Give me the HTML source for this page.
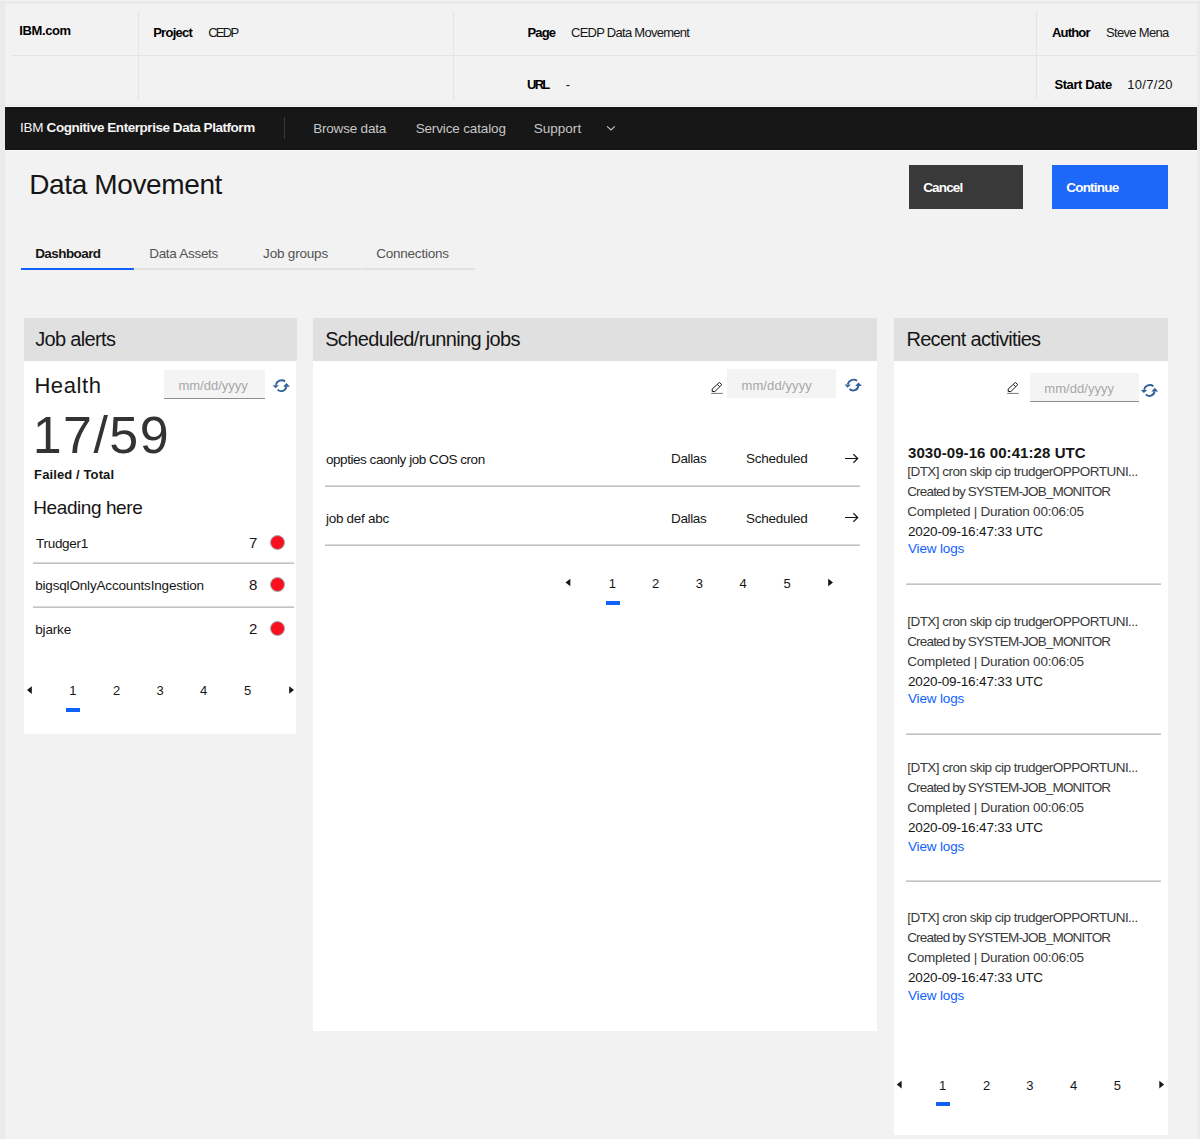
<!DOCTYPE html>
<html><head><meta charset="utf-8"><title>Data Movement</title>
<style>
html,body{margin:0;padding:0;}
body{width:1200px;height:1139px;overflow:hidden;background:#eaeaea;position:relative;font-family:"Liberation Sans",sans-serif;}
.a{position:absolute;}
.t{position:absolute;white-space:nowrap;line-height:1;}
svg{position:absolute;overflow:visible;}
</style></head><body>
<div class="a" style="left:5px;top:4px;width:1192px;height:1135px;background:#f2f2f2"></div>
<div class="a" style="left:0;top:0;width:1200px;height:1px;background:#f2f2f2"></div>
<!-- header table lines -->
<div class="a" style="left:12px;top:55px;width:1185px;height:1px;background:#e4e4e4"></div>
<div class="a" style="left:138px;top:11px;width:1px;height:88px;background:#e4e4e4"></div>
<div class="a" style="left:453px;top:11px;width:1px;height:88px;background:#e4e4e4"></div>
<div class="a" style="left:1036px;top:11px;width:1px;height:88px;background:#e4e4e4"></div>
<div class="a" style="left:5px;top:105px;width:1192px;height:1px;background:#e6e6e6"></div>
<div class="a" style="left:5px;top:106px;width:1192px;height:1px;background:#fafafa"></div>
<div class="a" style="left:5px;top:150px;width:1192px;height:1px;background:#fafafa"></div>
<!-- nav -->
<div class="a" style="left:5px;top:107px;width:1192px;height:43px;background:#171717"></div>
<div class="a" style="left:284px;top:117px;width:1px;height:22px;background:#393939"></div>
<svg style="left:0;top:0" width="1200" height="200"><path d="M607.1,126.3 L611,130 L614.8,126.3" fill="none" stroke="#c6c6c6" stroke-width="1.1"/></svg>
<!-- buttons -->
<div class="a" style="left:909px;top:165px;width:114px;height:44px;background:#393939"></div>
<div class="a" style="left:1052px;top:165px;width:116px;height:44px;background:#1d68f8"></div>
<!-- tabs -->
<div class="a" style="left:21px;top:268px;width:113px;height:2px;background:#0f62fe"></div>
<div class="a" style="left:135px;top:268px;width:226px;height:2px;background:#e0e0e0"></div>
<div class="a" style="left:362px;top:268px;width:113px;height:2px;background:#e0e0e0"></div>
<!-- panels -->
<div class="a" style="left:24px;top:318px;width:273px;height:43px;background:#e0e0e0"></div>
<div class="a" style="left:24px;top:361px;width:272px;height:373px;background:#fff"></div>
<div class="a" style="left:313px;top:318px;width:564px;height:43px;background:#e0e0e0"></div>
<div class="a" style="left:313px;top:361px;width:564px;height:670px;background:#fff"></div>
<div class="a" style="left:894px;top:318px;width:274px;height:43px;background:#e0e0e0"></div>
<div class="a" style="left:894px;top:361px;width:274px;height:774px;background:#fff"></div>
<!-- date inputs -->
<div class="a" style="left:164px;top:370px;width:101px;height:28px;background:#f4f4f4;border-bottom:1px solid #8d8d8d"></div>
<div class="a" style="left:727px;top:369px;width:109px;height:29px;background:#f4f4f4"></div>
<div class="a" style="left:1030px;top:373px;width:109px;height:28px;background:#f4f4f4;border-bottom:1px solid #8d8d8d"></div>
<!-- left list dividers -->
<div class="a" style="left:33px;top:562px;width:261px;height:2px;background:linear-gradient(#d9d9d9 50%,#c3c3c3 50%)"></div>
<div class="a" style="left:33px;top:606px;width:261px;height:2px;background:linear-gradient(#d9d9d9 50%,#c3c3c3 50%)"></div>
<!-- red dots -->
<div class="a" style="left:270px;top:535px;width:13px;height:13px;border-radius:50%;background:#fa0f1e;border:0.7px solid #a0aeb2"></div>
<div class="a" style="left:270px;top:577px;width:13px;height:13px;border-radius:50%;background:#fa0f1e;border:0.7px solid #a0aeb2"></div>
<div class="a" style="left:270px;top:621.3px;width:13px;height:13px;border-radius:50%;background:#fa0f1e;border:0.7px solid #a0aeb2"></div>
<!-- middle dividers -->
<div class="a" style="left:325px;top:485px;width:535px;height:2px;background:linear-gradient(#d9d9d9 50%,#c3c3c3 50%)"></div>
<div class="a" style="left:325px;top:544px;width:535px;height:2px;background:linear-gradient(#d9d9d9 50%,#c3c3c3 50%)"></div>
<!-- right dividers -->
<div class="a" style="left:906px;top:583px;width:255px;height:2px;background:linear-gradient(#d9d9d9 50%,#c3c3c3 50%)"></div>
<div class="a" style="left:906px;top:733px;width:255px;height:2px;background:linear-gradient(#d9d9d9 50%,#c3c3c3 50%)"></div>
<div class="a" style="left:906px;top:880px;width:255px;height:2px;background:linear-gradient(#d9d9d9 50%,#c3c3c3 50%)"></div>
<!-- pagination underlines -->
<div class="a" style="left:66px;top:708px;width:14px;height:4px;background:#0f62fe"></div>
<div class="a" style="left:606px;top:601px;width:14px;height:4px;background:#0f62fe"></div>
<div class="a" style="left:936px;top:1102px;width:14px;height:4px;background:#0f62fe"></div>
<!-- icons svg layer -->
<svg style="left:0;top:0" width="1200" height="1139">
<defs>
<g id="sync"><path d="M3.8,5.9 A6,6 0 0 1 13.1,2.4" fill="none" stroke="#2e6099" stroke-width="1.9"/><path d="M0.6,6.2 L6.9,6.2 L3.6,9.3 Z" fill="#2e6099"/><path d="M5.5,10.6 A5.2,5.2 0 0 0 14.3,7.6" fill="none" stroke="#2e6099" stroke-width="1.9"/><path d="M11.1,7.7 L14.5,4.0 L17.9,7.7 Z" fill="#2e6099"/></g>
<g id="pencil"><path d="M2.2,9.0 L9.4,2.5 L11.8,4.7 L4.8,11.6 L2.2,11.5 Z M7.4,4.5 L9.6,6.7" fill="none" stroke="#161616" stroke-width="1" stroke-linejoin="round"/><path d="M1.2,13.4 H12.8" stroke="#777" stroke-width="1"/></g>
<g id="arrow"><path d="M0,4.2 H12.6 M8.4,0 L12.7,4.2 L8.4,8.4" fill="none" stroke="#161616" stroke-width="1.2"/></g>
<g id="cl"><path d="M4.8,0 L0,3.8 L4.8,7.6 Z" fill="#161616"/></g>
<g id="cr"><path d="M0,0 L4.8,3.8 L0,7.6 Z" fill="#161616"/></g>
</defs>
<use href="#sync" x="272" y="379"/>
<use href="#sync" x="844" y="378.4"/>
<use href="#sync" x="1140.3" y="383.8"/>
<use href="#pencil" x="710" y="380"/>
<use href="#pencil" x="1006" y="380"/>
<use href="#arrow" x="845" y="454.3"/>
<use href="#arrow" x="845" y="513.3"/>
<use href="#cl" x="27" y="686.3"/>
<use href="#cr" x="289.2" y="686.2"/>
<use href="#cl" x="565.5" y="578.7"/>
<use href="#cr" x="828.2" y="578.7"/>
<use href="#cl" x="896.8" y="1080.8"/>
<use href="#cr" x="1159.3" y="1080.8"/>
</svg>

<div class="t" style="left:19.20px;top:23.60px;font-size:13px;font-weight:bold;color:#000;letter-spacing:-0.372px;">IBM.com</div>
<div class="t" style="left:153.15px;top:25.70px;font-size:13px;font-weight:bold;color:#000;letter-spacing:-0.712px;">Project</div>
<div class="t" style="left:208.15px;top:25.70px;font-size:13px;color:#161616;letter-spacing:-1.726px;">CEDP</div>
<div class="t" style="left:527.42px;top:26.00px;font-size:13px;font-weight:bold;color:#000;letter-spacing:-0.824px;">Page</div>
<div class="t" style="left:570.98px;top:26.00px;font-size:13px;color:#161616;letter-spacing:-0.720px;">CEDP Data Movement</div>
<div class="t" style="left:1052.00px;top:26.00px;font-size:13px;font-weight:bold;color:#000;letter-spacing:-0.808px;">Author</div>
<div class="t" style="left:1105.98px;top:26.00px;font-size:13px;color:#161616;letter-spacing:-0.668px;">Steve Mena</div>
<div class="t" style="left:526.98px;top:78.30px;font-size:13px;font-weight:bold;color:#000;letter-spacing:-1.729px;">URL</div>
<div class="t" style="left:565.70px;top:78.30px;font-size:13px;color:#161616;">-</div>
<div class="t" style="left:1054.42px;top:78.20px;font-size:13px;font-weight:bold;color:#000;letter-spacing:-0.399px;">Start Date</div>
<div class="t" style="left:1127.20px;top:78.20px;font-size:13px;color:#161616;letter-spacing:0.331px;">10/7/20</div>
<div class="t" style="left:20.00px;top:120.75px;font-size:13.5px;color:#f4f4f4;letter-spacing:-0.210px;">IBM</div>
<div class="t" style="left:46.60px;top:120.75px;font-size:13.5px;font-weight:bold;color:#f4f4f4;letter-spacing:-0.454px;">Cognitive Enterprise Data Platform</div>
<div class="t" style="left:313.20px;top:122.25px;font-size:13.5px;color:#c6c6c6;letter-spacing:-0.196px;">Browse data</div>
<div class="t" style="left:415.64px;top:122.25px;font-size:13.5px;color:#c6c6c6;letter-spacing:-0.141px;">Service catalog</div>
<div class="t" style="left:533.64px;top:122.25px;font-size:13.5px;color:#c6c6c6;letter-spacing:0.040px;">Support</div>
<div class="t" style="left:29.16px;top:170.50px;font-size:28px;color:#161616;letter-spacing:-0.367px;">Data Movement</div>
<div class="t" style="left:923.15px;top:181.25px;font-size:13.5px;font-weight:bold;color:#ffffff;letter-spacing:-0.838px;">Cancel</div>
<div class="t" style="left:1066.20px;top:181.25px;font-size:13.5px;font-weight:bold;color:#ffffff;letter-spacing:-0.773px;">Continue</div>
<div class="t" style="left:35.20px;top:246.75px;font-size:13.5px;font-weight:bold;color:#161616;letter-spacing:-0.579px;">Dashboard</div>
<div class="t" style="left:149.20px;top:246.75px;font-size:13.5px;color:#525252;letter-spacing:-0.290px;">Data Assets</div>
<div class="t" style="left:263.10px;top:246.75px;font-size:13.5px;color:#525252;letter-spacing:-0.191px;">Job groups</div>
<div class="t" style="left:376.20px;top:246.75px;font-size:13.5px;color:#525252;letter-spacing:-0.219px;">Connections</div>
<div class="t" style="left:35.15px;top:329.00px;font-size:20px;color:#161616;letter-spacing:-0.662px;">Job alerts</div>
<div class="t" style="left:34.40px;top:374.50px;font-size:22px;color:#161616;letter-spacing:0.593px;">Health</div>
<div class="t" style="left:178.50px;top:379.40px;font-size:13px;color:#a8a8a8;letter-spacing:-0.017px;">mm/dd/yyyy</div>
<div class="t" style="left:32.80px;top:409.30px;font-size:52px;color:#333333;letter-spacing:1.408px;">17/59</div>
<div class="t" style="left:34.10px;top:468.00px;font-size:13px;font-weight:bold;color:#161616;letter-spacing:0.115px;">Failed / Total</div>
<div class="t" style="left:33.30px;top:498.00px;font-size:19px;color:#161616;letter-spacing:-0.424px;">Heading here</div>
<div class="t" style="left:36.00px;top:536.75px;font-size:13.5px;color:#161616;letter-spacing:-0.285px;">Trudger1</div>
<div class="t" style="left:35.20px;top:578.75px;font-size:13.5px;color:#161616;letter-spacing:-0.170px;">bigsqlOnlyAccountsIngestion</div>
<div class="t" style="left:35.20px;top:622.75px;font-size:13.5px;color:#161616;letter-spacing:-0.148px;">bjarke</div>
<div class="t" style="left:249.00px;top:535.00px;font-size:15px;color:#161616;">7</div>
<div class="t" style="left:249.00px;top:577.00px;font-size:15px;color:#161616;">8</div>
<div class="t" style="left:249.00px;top:621.25px;font-size:15px;color:#161616;">2</div>
<div class="t" style="left:72.80px;top:684.00px;font-size:13px;color:#161616;width:40px;margin-left:-20px;text-align:center;">1</div>
<div class="t" style="left:116.50px;top:684.00px;font-size:13px;color:#161616;width:40px;margin-left:-20px;text-align:center;">2</div>
<div class="t" style="left:160.00px;top:684.00px;font-size:13px;color:#161616;width:40px;margin-left:-20px;text-align:center;">3</div>
<div class="t" style="left:203.50px;top:684.00px;font-size:13px;color:#161616;width:40px;margin-left:-20px;text-align:center;">4</div>
<div class="t" style="left:247.60px;top:684.00px;font-size:13px;color:#161616;width:40px;margin-left:-20px;text-align:center;">5</div>
<div class="t" style="left:325.18px;top:328.80px;font-size:20px;color:#161616;letter-spacing:-0.650px;">Scheduled/running jobs</div>
<div class="t" style="left:741.50px;top:378.50px;font-size:13px;color:#a8a8a8;letter-spacing:0.103px;">mm/dd/yyyy</div>
<div class="t" style="left:326.00px;top:452.75px;font-size:13.5px;color:#161616;letter-spacing:-0.458px;">oppties caonly job COS cron</div>
<div class="t" style="left:671.08px;top:452.45px;font-size:13.5px;color:#161616;letter-spacing:-0.375px;">Dallas</div>
<div class="t" style="left:746.08px;top:452.45px;font-size:13.5px;color:#161616;letter-spacing:-0.268px;">Scheduled</div>
<div class="t" style="left:326.00px;top:512.05px;font-size:13.5px;color:#161616;letter-spacing:-0.287px;">job def abc</div>
<div class="t" style="left:671.08px;top:511.55px;font-size:13.5px;color:#161616;letter-spacing:-0.375px;">Dallas</div>
<div class="t" style="left:746.08px;top:511.55px;font-size:13.5px;color:#161616;letter-spacing:-0.268px;">Scheduled</div>
<div class="t" style="left:612.30px;top:577.20px;font-size:13px;color:#161616;width:40px;margin-left:-20px;text-align:center;">1</div>
<div class="t" style="left:655.70px;top:577.20px;font-size:13px;color:#161616;width:40px;margin-left:-20px;text-align:center;">2</div>
<div class="t" style="left:699.40px;top:577.20px;font-size:13px;color:#161616;width:40px;margin-left:-20px;text-align:center;">3</div>
<div class="t" style="left:743.00px;top:577.20px;font-size:13px;color:#161616;width:40px;margin-left:-20px;text-align:center;">4</div>
<div class="t" style="left:787.00px;top:577.20px;font-size:13px;color:#161616;width:40px;margin-left:-20px;text-align:center;">5</div>
<div class="t" style="left:906.40px;top:328.90px;font-size:20px;color:#161616;letter-spacing:-0.681px;">Recent activities</div>
<div class="t" style="left:1044.30px;top:381.70px;font-size:13px;color:#a8a8a8;letter-spacing:0.044px;">mm/dd/yyyy</div>
<div class="t" style="left:908.00px;top:444.90px;font-size:15px;font-weight:bold;color:#161616;letter-spacing:0.077px;">3030-09-16 00:41:28 UTC</div>
<div class="t" style="left:907.20px;top:464.75px;font-size:13.5px;color:#393939;letter-spacing:-0.525px;">[DTX] cron skip cip trudgerOPPORTUNI...</div>
<div class="t" style="left:907.20px;top:484.75px;font-size:13.5px;color:#393939;letter-spacing:-0.828px;">Created by SYSTEM-JOB_MONITOR</div>
<div class="t" style="left:907.20px;top:504.75px;font-size:13.5px;color:#393939;letter-spacing:-0.245px;">Completed | Duration 00:06:05</div>
<div class="t" style="left:908.00px;top:524.75px;font-size:13.5px;color:#161616;letter-spacing:-0.159px;">2020-09-16:47:33 UTC</div>
<div class="t" style="left:908.00px;top:542.05px;font-size:13.5px;color:#0f62fe;letter-spacing:-0.157px;">View logs</div>
<div class="t" style="left:907.20px;top:614.75px;font-size:13.5px;color:#393939;letter-spacing:-0.525px;">[DTX] cron skip cip trudgerOPPORTUNI...</div>
<div class="t" style="left:907.20px;top:634.75px;font-size:13.5px;color:#393939;letter-spacing:-0.828px;">Created by SYSTEM-JOB_MONITOR</div>
<div class="t" style="left:907.20px;top:654.75px;font-size:13.5px;color:#393939;letter-spacing:-0.245px;">Completed | Duration 00:06:05</div>
<div class="t" style="left:908.00px;top:674.75px;font-size:13.5px;color:#161616;letter-spacing:-0.159px;">2020-09-16:47:33 UTC</div>
<div class="t" style="left:908.00px;top:692.05px;font-size:13.5px;color:#0f62fe;letter-spacing:-0.157px;">View logs</div>
<div class="t" style="left:907.20px;top:761.45px;font-size:13.5px;color:#393939;letter-spacing:-0.525px;">[DTX] cron skip cip trudgerOPPORTUNI...</div>
<div class="t" style="left:907.20px;top:781.45px;font-size:13.5px;color:#393939;letter-spacing:-0.828px;">Created by SYSTEM-JOB_MONITOR</div>
<div class="t" style="left:907.20px;top:801.45px;font-size:13.5px;color:#393939;letter-spacing:-0.245px;">Completed | Duration 00:06:05</div>
<div class="t" style="left:908.00px;top:821.45px;font-size:13.5px;color:#161616;letter-spacing:-0.159px;">2020-09-16:47:33 UTC</div>
<div class="t" style="left:908.00px;top:840.05px;font-size:13.5px;color:#0f62fe;letter-spacing:-0.157px;">View logs</div>
<div class="t" style="left:907.20px;top:911.45px;font-size:13.5px;color:#393939;letter-spacing:-0.525px;">[DTX] cron skip cip trudgerOPPORTUNI...</div>
<div class="t" style="left:907.20px;top:931.45px;font-size:13.5px;color:#393939;letter-spacing:-0.828px;">Created by SYSTEM-JOB_MONITOR</div>
<div class="t" style="left:907.20px;top:951.45px;font-size:13.5px;color:#393939;letter-spacing:-0.245px;">Completed | Duration 00:06:05</div>
<div class="t" style="left:908.00px;top:971.45px;font-size:13.5px;color:#161616;letter-spacing:-0.159px;">2020-09-16:47:33 UTC</div>
<div class="t" style="left:908.00px;top:988.75px;font-size:13.5px;color:#0f62fe;letter-spacing:-0.157px;">View logs</div>
<div class="t" style="left:942.70px;top:1078.90px;font-size:13px;color:#161616;width:40px;margin-left:-20px;text-align:center;">1</div>
<div class="t" style="left:986.70px;top:1078.90px;font-size:13px;color:#161616;width:40px;margin-left:-20px;text-align:center;">2</div>
<div class="t" style="left:1029.90px;top:1078.90px;font-size:13px;color:#161616;width:40px;margin-left:-20px;text-align:center;">3</div>
<div class="t" style="left:1073.60px;top:1078.90px;font-size:13px;color:#161616;width:40px;margin-left:-20px;text-align:center;">4</div>
<div class="t" style="left:1117.30px;top:1078.90px;font-size:13px;color:#161616;width:40px;margin-left:-20px;text-align:center;">5</div>
</body></html>
